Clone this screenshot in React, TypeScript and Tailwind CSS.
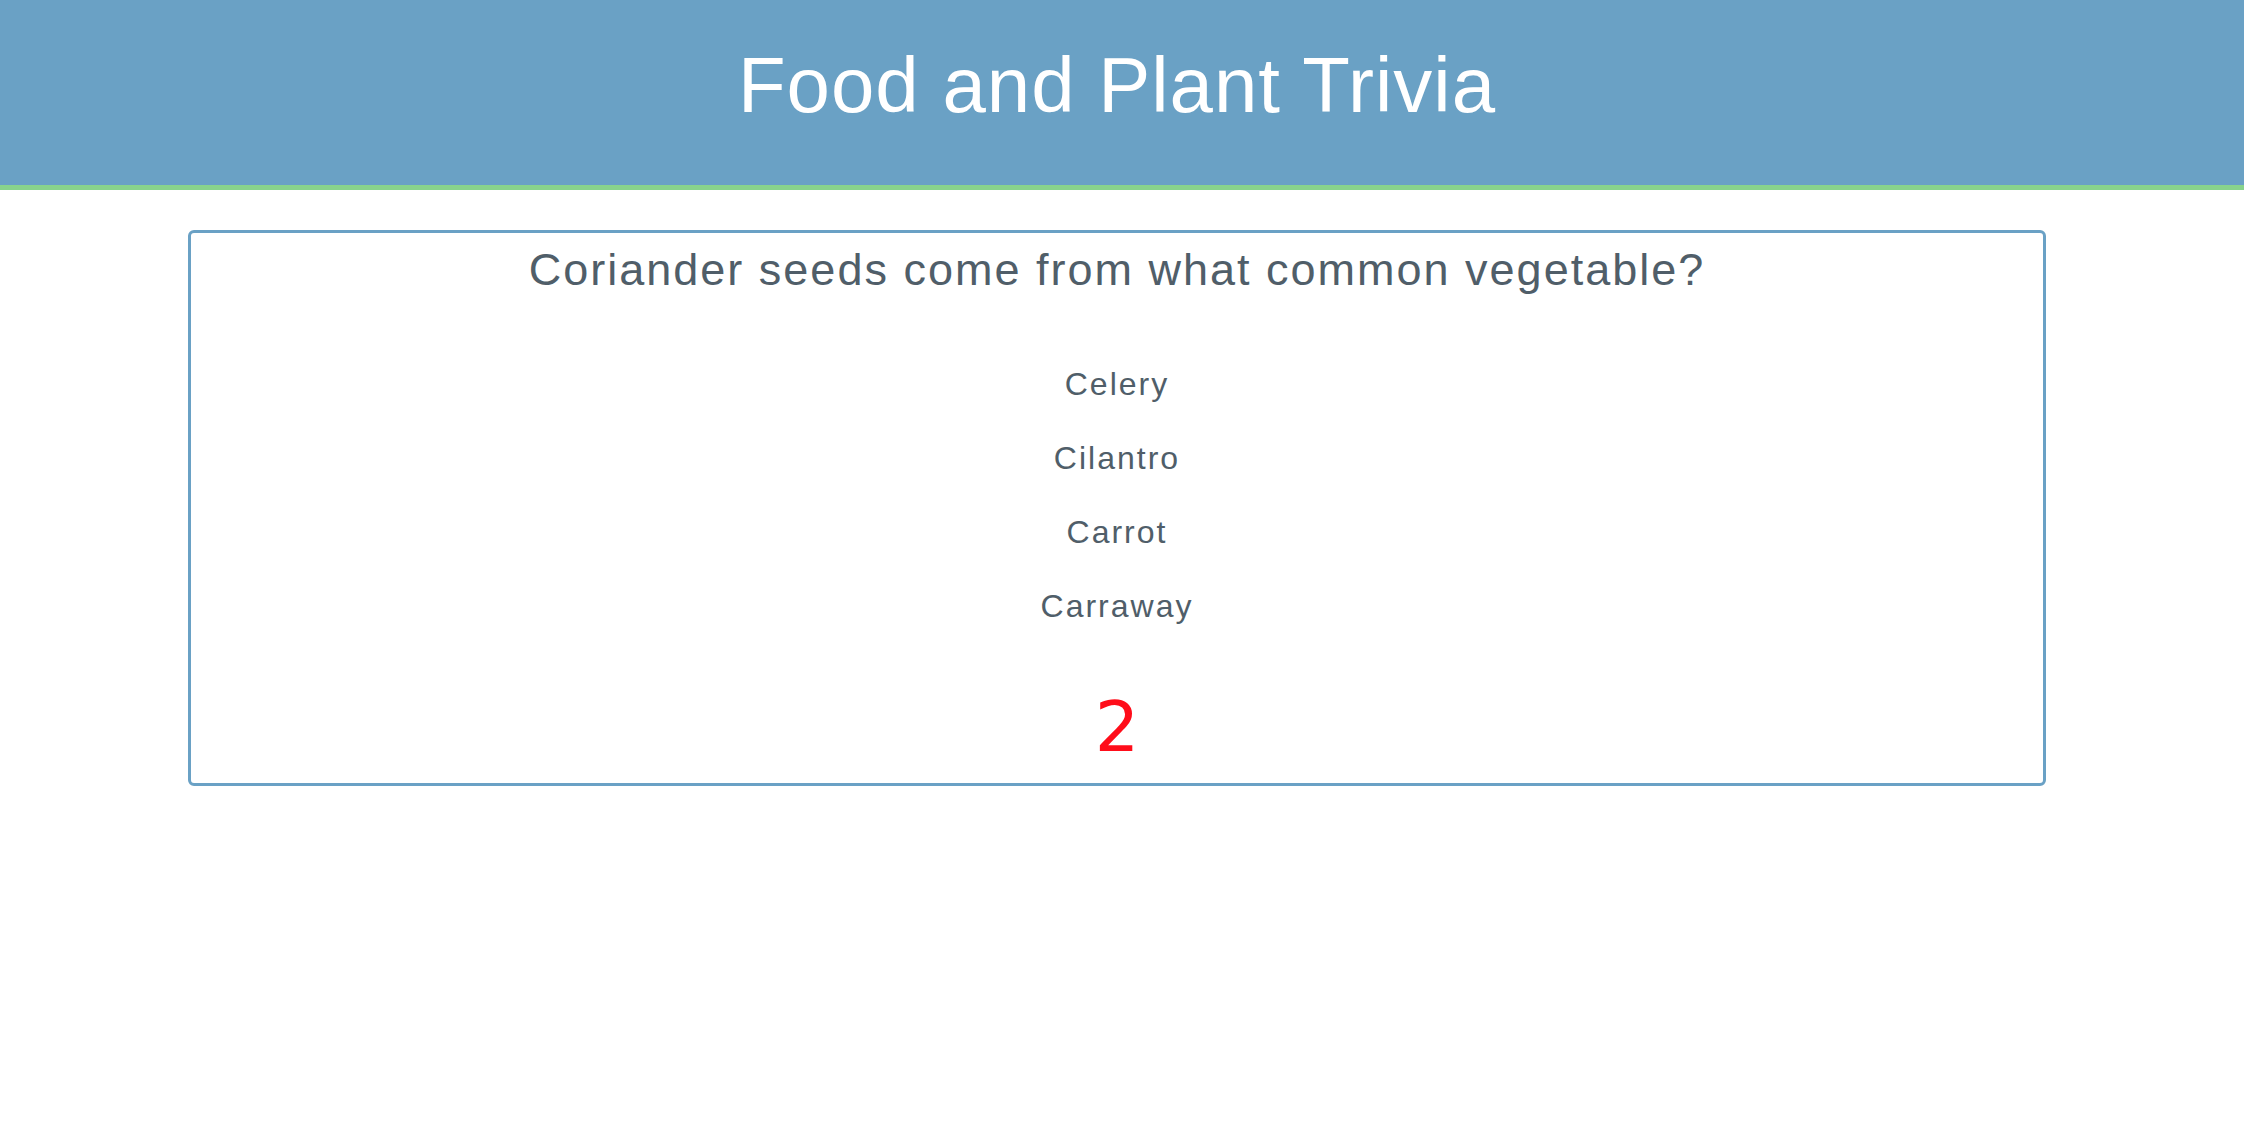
export default function App() {
  const options = ["Celery", "Cilantro", "Carrot", "Carraway"];

  return (
    <div className="min-h-screen bg-white font-['Liberation_Sans',Arial,sans-serif]">
      {/* Header */}
      <header className="h-[190px] bg-[#6aa1c5] border-b-[5px] border-[#88d38c] pr-[10px]">
        <h1 className="pt-[46px] text-center text-[78px] leading-none tracking-[1px] text-white">
          Food and Plant Trivia
        </h1>
      </header>

      {/* Question card */}
      <main className="pl-[188px] pr-[198px] pt-[40px]">
        <div className="border-[3px] border-[#6aa1c5] rounded-[6px] pt-[14px] pb-[21px] flex flex-col items-center text-[#505e69]">
          <h2 className="text-[45px] leading-none tracking-[2px]">
            Coriander seeds come from what common vegetable?
          </h2>

          <ul className="mt-[76px] flex flex-col items-center gap-[42px]">
            {options.map((opt) => (
              <li key={opt} className="text-[32px] leading-none tracking-[2px] cursor-pointer">
                {opt}
              </li>
            ))}
          </ul>

          <div className="mt-[70px] text-[70px] leading-none text-[#ff0d1a] font-['DejaVu_Sans',sans-serif]">
            2
          </div>
        </div>
      </main>
    </div>
  );
}
